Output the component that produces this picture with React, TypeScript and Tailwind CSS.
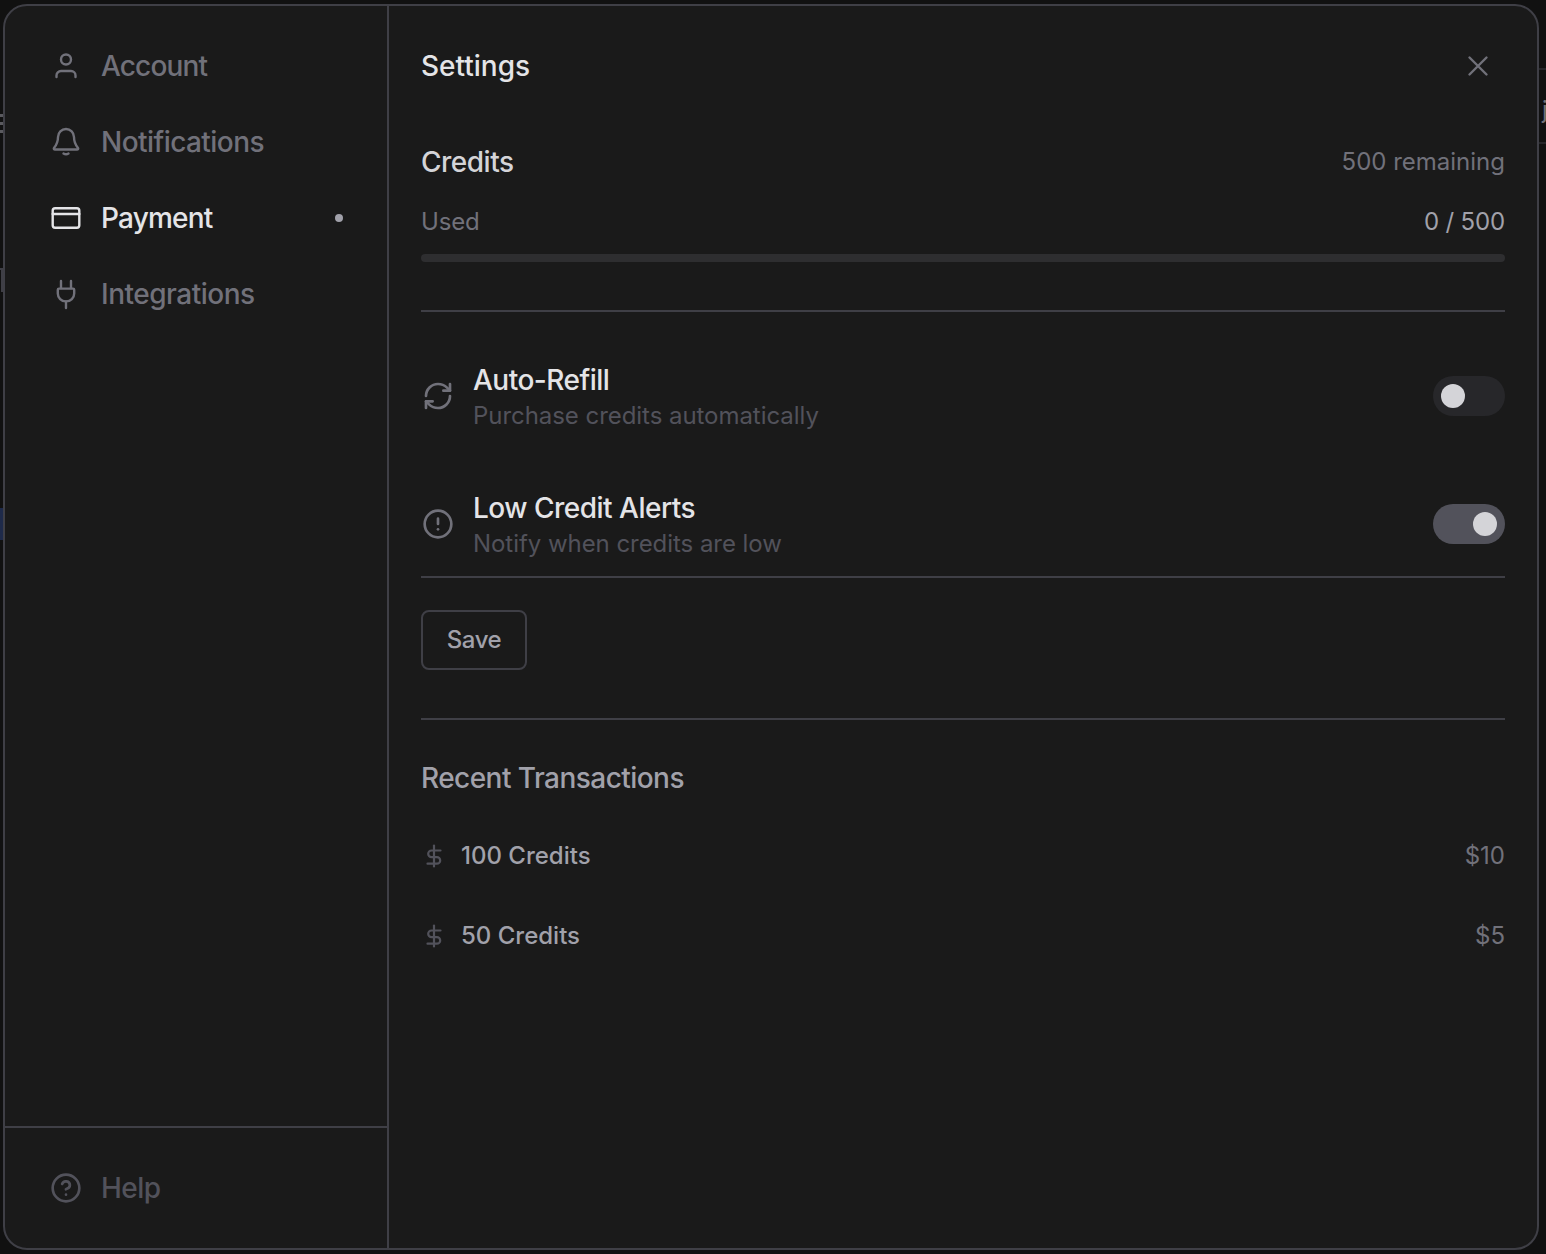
import type { ReactNode } from 'react';
import { CircleAlert, CircleHelp, RefreshCw } from 'lucide-react';

const UserIcon = () => (
  <svg width="32" height="32" viewBox="0 0 32 32" fill="none" stroke="currentColor" strokeWidth="2.4" strokeLinecap="round" strokeLinejoin="round">
    <circle cx="16" cy="9.5" r="5" />
    <path d="M6.5 27v-1.5A4.5 4.5 0 0 1 11 21h10a4.5 4.5 0 0 1 4.5 4.5V27" />
  </svg>
);

const BellIcon = () => (
  <svg width="32" height="32" viewBox="0 0 32 32" fill="none" stroke="currentColor" strokeWidth="2.4" strokeLinecap="round" strokeLinejoin="round">
    <path d="M16 3a8 8 0 0 0-8 8c0 5-1.5 8-4 11-.5.7 0 1.5 1 1.5h22c1 0 1.5-.8 1-1.5-2.5-3-4-6-4-11a8 8 0 0 0-8-8z" />
    <path d="M13.5 27.5q2.5 1.5 5 0" />
  </svg>
);

const CardIcon = () => (
  <svg width="32" height="32" viewBox="0 0 32 32" fill="none" stroke="currentColor" strokeWidth="2.4" strokeLinecap="round" strokeLinejoin="round">
    <rect x="2.7" y="6.3" width="26.6" height="19.4" rx="2.4" />
    <path d="M2.7 12h26.6" />
  </svg>
);

const PlugIcon = () => (
  <svg width="32" height="32" viewBox="0 0 32 32" fill="none" stroke="currentColor" strokeWidth="2.4" strokeLinecap="round" strokeLinejoin="round">
    <path d="M11 3v7M21 3v7" />
    <path d="M7.8 11.8a1.2 1.2 0 0 1 1.2-1.2h14a1.2 1.2 0 0 1 1.2 1.2v3.6a8 8 0 0 1-8 8h-.4a8 8 0 0 1-8-8z" />
    <path d="M16 23.5V30" />
  </svg>
);

const CloseIcon = () => (
  <svg width="32" height="32" viewBox="0 0 32 32" fill="none" stroke="currentColor" strokeWidth="2.4" strokeLinecap="round">
    <path d="M7.5 7.5l17 17M24.5 7.5l-17 17" />
  </svg>
);

const DollarIcon = () => (
  <svg width="24" height="32" viewBox="0 0 24 32" fill="none" stroke="currentColor" strokeWidth="2.2" strokeLinecap="round" strokeLinejoin="round">
    <path d="M12 5.5v21" />
    <path d="M18.5 10.5h-9a3.3 3.3 0 0 0 0 6.6h5.4a3.3 3.3 0 0 1 0 6.6H5.5" />
  </svg>
);

const navItems = [
  { label: 'Account', icon: <UserIcon />, tracking: 'tracking-[-0.85px]' },
  { label: 'Notifications', icon: <BellIcon />, tracking: 'tracking-[-0.55px]' },
  { label: 'Payment', icon: <CardIcon />, tracking: 'tracking-[-0.8px]', active: true },
  { label: 'Integrations', icon: <PlugIcon />, tracking: 'tracking-[-0.5px]' },
];

const Divider = ({ className }: { className: string }) => <div className={`h-[2px] bg-[#3f3f46] ${className}`} />;

const SettingRow = ({
  icon,
  title,
  desc,
  on,
  className,
}: {
  icon: ReactNode;
  title: string;
  desc: string;
  on: boolean;
  className: string;
}) => (
  <div className={`flex items-center ${className}`}>
    <div className="w-[33px] ml-[1px] mr-[18px] text-[#71717a]">{icon}</div>
    <div className="flex-1">
      <p className="text-[28px] leading-[40px] font-medium tracking-[-0.5px] text-[#e4e4e7]">{title}</p>
      <p className="text-[24px] leading-[32px] tracking-[-0.05px] text-[#52525b]">{desc}</p>
    </div>
    <div className={`w-[72px] h-[40px] rounded-full flex items-center px-2 ${on ? 'bg-[#52525b] justify-end' : 'bg-[#27272a] justify-start'}`}>
      <div className="w-6 h-6 rounded-full bg-[#d4d4d8]" />
    </div>
  </div>
);

const TransactionRow = ({ credits, price }: { credits: string; price: string }) => (
  <div className="h-20 flex items-center">
    <div className="w-[39px] ml-[1px] text-[#52525b]">
      <DollarIcon />
    </div>
    <span className="flex-1 text-[24px] font-medium text-[#a1a1aa]">{credits}</span>
    <span className="text-[24px] text-[#71717a]">{price}</span>
  </div>
);

export default function App() {
  return (
    <div className="relative w-[1546px] h-[1254px] overflow-hidden bg-[#111111] pt-[4px] pl-[3px] font-['Inter',sans-serif]">
      {/* Page behind the dialog, only its edges show */}
      <div className="absolute left-0 top-[114px] w-[3px] flex flex-col gap-[5px]">
        <div className="h-[3px] bg-[#5a5a5f]" />
        <div className="h-[3px] bg-[#5a5a5f]" />
        <div className="h-[3px] bg-[#5a5a5f]" />
      </div>
      <div className="absolute left-0 top-[268px] w-[3px] h-[24px] border-t-2 border-r-2 border-[#3f3f46]" />
      <div className="absolute left-0 top-[508px] w-[3px] h-[32px] bg-[#1e2a4a]" />
      <div className="absolute right-0 top-[68px] w-[7px] h-[76px] border-y-2 border-[#26262a]">
        <span className="absolute left-[3px] top-[24px] text-[24px] leading-[32px] text-[#71717a]">j</span>
      </div>

      <div className="relative w-[1536px] h-[1246px] flex border-2 border-[#3f3f46] rounded-[24px] bg-[#1a1a1a] overflow-hidden">
        {/* Sidebar */}
        <aside className="w-[384px] flex flex-col border-r-2 border-[#3f3f46]">
          <nav className="flex-1 pt-[22px] pl-[45px] pr-[44px]">
            {navItems.map((item) => (
              <div key={item.label} className={`h-[76px] flex items-center ${item.active ? 'text-[#e4e4e7]' : 'text-[#71717a]'}`}>
                <span className="mr-[19px]">{item.icon}</span>
                <span className={`flex-1 text-[28px] font-medium ${item.tracking}`}>{item.label}</span>
                {item.active && <span className="w-2 h-2 rounded-full bg-[#a1a1aa]" />}
              </div>
            ))}
          </nav>
          <div className="h-[122px] border-t-2 border-[#3f3f46] flex items-center pl-[45px] text-[#52525b]">
            <CircleHelp size={32} className="mr-[19px]" />
            <span className="text-[28px] font-medium tracking-[-0.5px]">Help</span>
          </div>
        </aside>

        {/* Main */}
        <main className="flex-1 flex flex-col px-8">
          <div className="h-[120px] flex items-center justify-between shrink-0">
            <h1 className="text-[28px] font-medium text-[#e4e4e7]">Settings</h1>
            <span className="text-[#71717a] mr-[11px]">
              <CloseIcon />
            </span>
          </div>

          <div className="mt-4 h-10 flex items-center justify-between">
            <h2 className="text-[28px] font-medium tracking-[-0.5px] text-[#d4d4d8]">Credits</h2>
            <span className="text-[24px] text-[#71717a]">500 remaining</span>
          </div>
          <div className="mt-5 h-10 flex items-center justify-between">
            <span className="text-[24px] tracking-[-0.2px] text-[#71717a]">Used</span>
            <span className="text-[24px] tracking-[-0.15px] text-[#a1a1aa]">0 / 500</span>
          </div>
          <div className="mt-3 h-2 rounded-full bg-[#2e2e30]" />
          <Divider className="mt-12" />

          <SettingRow className="mt-12" icon={<RefreshCw size={32} strokeWidth={2} />} title="Auto-Refill" desc="Purchase credits automatically" on={false} />
          <SettingRow className="mt-14" icon={<CircleAlert size={32} strokeWidth={2} />} title="Low Credit Alerts" desc="Notify when credits are low" on />
          <Divider className="mt-4" />

          <button className="mt-8 w-[106px] h-[60px] rounded-[8px] border-2 border-[#3f3f46] text-[24px] font-medium tracking-[-0.4px] text-[#a1a1aa]">Save</button>
          <Divider className="mt-12" />

          <h2 className="mt-[38px] text-[28px] leading-[40px] font-medium tracking-[-0.55px] text-[#a1a1aa]">Recent Transactions</h2>
          <div className="mt-[18px]">
            <TransactionRow credits="100 Credits" price="$10" />
            <TransactionRow credits="50 Credits" price="$5" />
          </div>
        </main>
      </div>
    </div>
  );
}
